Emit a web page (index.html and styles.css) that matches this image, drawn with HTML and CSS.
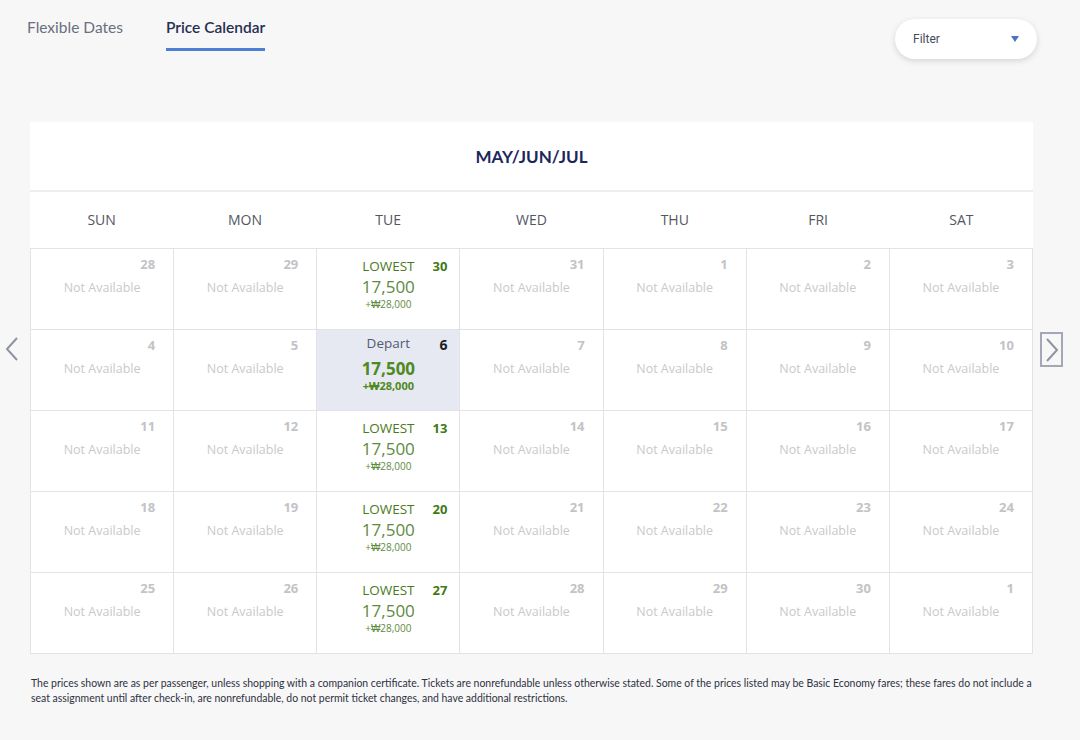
FILE: index.html
```html
<!DOCTYPE html>
<html lang="en">
<head>
<meta charset="utf-8">
<title>Price Calendar</title>
<link rel="stylesheet" href="styles.css">
</head>
<body>
<div class="topbar">
  <nav class="tabs">
    <a class="tab">Flexible Dates</a>
    <a class="tab active">Price Calendar</a>
  </nav>
  <button class="filter"><span>Filter</span><span class="caret"></span></button>
</div>

<div class="main">
  <div class="nav nav-left">
    <svg width="14" height="24" viewBox="0 0 14 24"><path d="M12 1 L2 12 L12 23" fill="none" stroke="#8e93a3" stroke-width="2"/></svg>
  </div>
  <section class="calendar">
    <header class="cal-title">MAY/JUN/JUL</header>
    <div class="weekdays">
      <div>SUN</div><div>MON</div><div>TUE</div><div>WED</div><div>THU</div><div>FRI</div><div>SAT</div>
    </div>
    <div class="grid">
      <div class="cell na"><div class="top"><span></span><span class="num">28</span></div><div class="msg">Not Available</div></div>
      <div class="cell na"><div class="top"><span></span><span class="num">29</span></div><div class="msg">Not Available</div></div>
      <div class="cell fare"><div class="top"><span></span><span class="label">LOWEST</span><span class="num">30</span></div><div class="price">17,500</div><div class="sub">+₩28,000</div></div>
      <div class="cell na"><div class="top"><span></span><span class="num">31</span></div><div class="msg">Not Available</div></div>
      <div class="cell na"><div class="top"><span></span><span class="num">1</span></div><div class="msg">Not Available</div></div>
      <div class="cell na"><div class="top"><span></span><span class="num">2</span></div><div class="msg">Not Available</div></div>
      <div class="cell na"><div class="top"><span></span><span class="num">3</span></div><div class="msg">Not Available</div></div>

      <div class="cell na"><div class="top"><span></span><span class="num">4</span></div><div class="msg">Not Available</div></div>
      <div class="cell na"><div class="top"><span></span><span class="num">5</span></div><div class="msg">Not Available</div></div>
      <div class="cell fare depart"><div class="top"><span></span><span class="label">Depart</span><span class="num">6</span></div><div class="price">17,500</div><div class="sub">+₩28,000</div></div>
      <div class="cell na"><div class="top"><span></span><span class="num">7</span></div><div class="msg">Not Available</div></div>
      <div class="cell na"><div class="top"><span></span><span class="num">8</span></div><div class="msg">Not Available</div></div>
      <div class="cell na"><div class="top"><span></span><span class="num">9</span></div><div class="msg">Not Available</div></div>
      <div class="cell na"><div class="top"><span></span><span class="num">10</span></div><div class="msg">Not Available</div></div>

      <div class="cell na"><div class="top"><span></span><span class="num">11</span></div><div class="msg">Not Available</div></div>
      <div class="cell na"><div class="top"><span></span><span class="num">12</span></div><div class="msg">Not Available</div></div>
      <div class="cell fare"><div class="top"><span></span><span class="label">LOWEST</span><span class="num">13</span></div><div class="price">17,500</div><div class="sub">+₩28,000</div></div>
      <div class="cell na"><div class="top"><span></span><span class="num">14</span></div><div class="msg">Not Available</div></div>
      <div class="cell na"><div class="top"><span></span><span class="num">15</span></div><div class="msg">Not Available</div></div>
      <div class="cell na"><div class="top"><span></span><span class="num">16</span></div><div class="msg">Not Available</div></div>
      <div class="cell na"><div class="top"><span></span><span class="num">17</span></div><div class="msg">Not Available</div></div>

      <div class="cell na"><div class="top"><span></span><span class="num">18</span></div><div class="msg">Not Available</div></div>
      <div class="cell na"><div class="top"><span></span><span class="num">19</span></div><div class="msg">Not Available</div></div>
      <div class="cell fare"><div class="top"><span></span><span class="label">LOWEST</span><span class="num">20</span></div><div class="price">17,500</div><div class="sub">+₩28,000</div></div>
      <div class="cell na"><div class="top"><span></span><span class="num">21</span></div><div class="msg">Not Available</div></div>
      <div class="cell na"><div class="top"><span></span><span class="num">22</span></div><div class="msg">Not Available</div></div>
      <div class="cell na"><div class="top"><span></span><span class="num">23</span></div><div class="msg">Not Available</div></div>
      <div class="cell na"><div class="top"><span></span><span class="num">24</span></div><div class="msg">Not Available</div></div>

      <div class="cell na"><div class="top"><span></span><span class="num">25</span></div><div class="msg">Not Available</div></div>
      <div class="cell na"><div class="top"><span></span><span class="num">26</span></div><div class="msg">Not Available</div></div>
      <div class="cell fare"><div class="top"><span></span><span class="label">LOWEST</span><span class="num">27</span></div><div class="price">17,500</div><div class="sub">+₩28,000</div></div>
      <div class="cell na"><div class="top"><span></span><span class="num">28</span></div><div class="msg">Not Available</div></div>
      <div class="cell na"><div class="top"><span></span><span class="num">29</span></div><div class="msg">Not Available</div></div>
      <div class="cell na"><div class="top"><span></span><span class="num">30</span></div><div class="msg">Not Available</div></div>
      <div class="cell na"><div class="top"><span></span><span class="num">1</span></div><div class="msg">Not Available</div></div>
    </div>
  </section>
  <div class="nav nav-right">
    <div class="nextbox">
      <svg width="14" height="24" viewBox="0 0 14 24"><path d="M2 1 L12 12 L2 23" fill="none" stroke="#8e93a3" stroke-width="2"/></svg>
    </div>
  </div>
</div>

<p class="disclaimer">The prices shown are as per passenger, unless shopping with a companion certificate. Tickets are nonrefundable unless otherwise stated. Some of the prices listed may be Basic Economy fares; these fares do not include a seat assignment until after check-in, are nonrefundable, do not permit ticket changes, and have additional restrictions.</p>
</body>
</html>
```

FILE: styles.css
```css
* { box-sizing: border-box; }

body {
  margin: 0;
  background: #f7f7f8;
  font-family: "Open Sans", "Liberation Sans", sans-serif;
  color: #333;
}

.topbar {
  height: 122px;
  display: flex;
  justify-content: space-between;
  align-items: flex-start;
  padding: 0 43px 0 27px;
}

.tabs {
  display: flex;
  gap: 43px;
}

.tab {
  font-family: Lato, "Liberation Sans", sans-serif;
  font-size: 15.5px;
  line-height: 20px;
  color: #6b6e80;
  padding-top: 17px;
  padding-bottom: 11px;
  border-bottom: 3px solid transparent;
}

.tab.active {
  color: #27304f;
  font-weight: 600;
  border-bottom-color: #4b7fd3;
}

.filter {
  margin-top: 19px;
  width: 142px;
  height: 40px;
  border: none;
  border-radius: 20px;
  background: #fff;
  box-shadow: 0 2px 6px rgba(0,0,0,0.14);
  display: flex;
  align-items: center;
  justify-content: space-between;
  padding: 0 18px 0 18px;
  font-family: Roboto, "Liberation Sans", sans-serif;
  font-size: 12px;
  color: #444a5a;
}

.caret {
  width: 0;
  height: 0;
  border-left: 4px solid transparent;
  border-right: 4px solid transparent;
  border-top: 6px solid #4a72c8;
}

.main {
  display: flex;
  align-items: flex-start;
}

.nav-left {
  width: 30px;
  padding: 215px 0 0 5px;
}

.nav-right {
  padding: 210px 0 0 7px;
}

.nextbox {
  width: 23px;
  height: 35px;
  border: 2px solid #a4a8b6;
  display: flex;
  align-items: center;
  justify-content: center;
}

.nav svg { display: block; }

.calendar {
  width: 1003px;
  background: #fff;
}

.cal-title {
  height: 70px;
  padding-top: 1px;
  display: flex;
  align-items: center;
  justify-content: center;
  font-family: Lato, "Liberation Sans", sans-serif;
  font-weight: 700;
  font-size: 17px;
  color: #1c285a;
  border-bottom: 2px solid #eeeef0;
}

.weekdays {
  display: grid;
  grid-template-columns: repeat(7, 1fr);
  height: 56px;
  padding-bottom: 1px;
  align-items: center;
  text-align: center;
  font-size: 14px;
  color: #53565f;
}

.grid {
  display: grid;
  grid-template-columns: repeat(7, 1fr);
  grid-auto-rows: 81px;
  border-top: 1px solid #e3e3e5;
  border-left: 1px solid #e3e3e5;
}

.cell {
  border-right: 1px solid #e3e3e5;
  border-bottom: 1px solid #e3e3e5;
  padding: 7px 12px 0 12px;
  text-align: center;
}

.top {
  display: grid;
  grid-template-columns: 1fr auto 1fr;
  align-items: center;
  line-height: 16px;
}

.top .num {
  grid-column: 3;
  justify-self: end;
  font-weight: 700;
  font-size: 13px;
}

.na .num {
  color: #c3c3c5;
  padding-right: 6px;
}

.msg {
  margin-top: 7px;
  font-size: 12.5px;
  line-height: 18px;
  color: #c9c9cb;
}

.fare .top { line-height: 20px; }
.fare .num { color: #3f7a15; font-size: 13px; }

.label {
  grid-column: 2;
  font-size: 13.5px;
  color: #4b7a1c;
}

.price {
  font-size: 17px;
  line-height: 22px;
  color: #5e8b3e;
}

.sub {
  font-size: 10px;
  line-height: 12px;
  color: #5e8b3e;
}

.depart {
  background: #e6e9f1;
  padding-top: 1px;
}

.depart .label { color: #555a75; font-size: 13.5px; }
.depart .num { color: #1d1d1d; font-size: 14px; padding-top: 4px; }
.depart .price { font-weight: 700; color: #4e8a22; margin-top: 3px; line-height: 22px; }
.depart .sub { font-weight: 700; font-size: 11px; color: #4e8a22; }

.disclaimer {
  margin: 22px 0 0 0;
  padding: 0 48px 0 31px;
  font-family: Lato, "Liberation Sans", sans-serif;
  font-size: 10.45px;
  line-height: 15px;
  color: #2e3140;
}
```
